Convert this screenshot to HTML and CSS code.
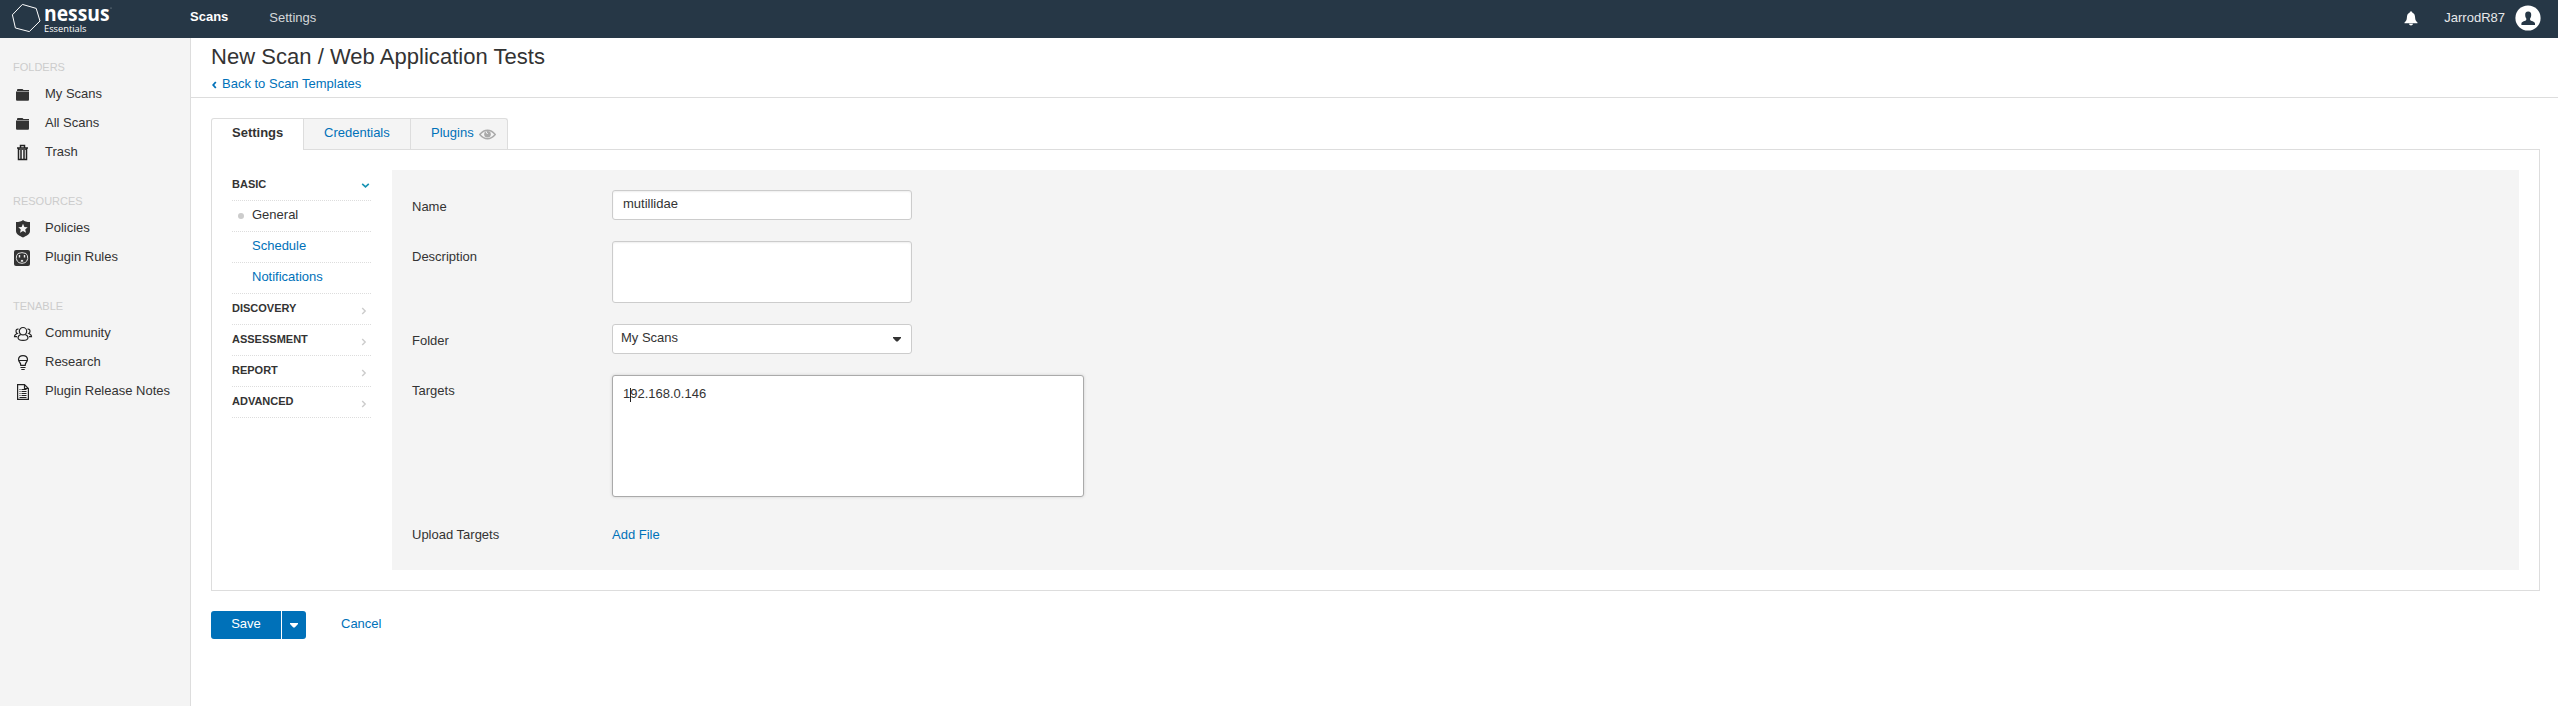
FILE: index.html
```html
<!DOCTYPE html>
<html lang="en">
<head>
<meta charset="utf-8">
<title>Nessus Essentials / New Scan</title>
<link rel="stylesheet" href="styles.css">
</head>
<body>
<header class="topbar">
  <svg class="logo" width="116" height="38" viewBox="0 0 116 38">
    <path d="M22.4 4.4 36.2 8.4 40 21 29.3 31.6 15.4 28 12.4 14.8Z" fill="none" stroke="#fff" stroke-width="1"/>
    <text class="logo-name" x="44" y="21.3" textLength="65.500" lengthAdjust="spacingAndGlyphs">nessus</text>
    <text class="logo-edition" x="44" y="31.700" textLength="42.5" lengthAdjust="spacingAndGlyphs">Essentials</text>
    <circle cx="111" cy="8" r=".6" fill="#9aa4ac"/>
  </svg>
  <nav class="topnav"><a class="active">Scans</a><a>Settings</a></nav>
  <div class="account">
    <svg class="bell" width="14" height="15" viewBox="0 0 14 15"><path d="M7 .5C8 .5 8.300 1.100 8.400 1.700 10.500 2.500 11 4.300 11.100 6.500 11.200 9 12 10.400 13.500 11.500V12.200H.5V11.500C2 10.400 2.800 9 2.900 6.500 3 4.300 3.500 2.500 5.600 1.700 5.700 1.100 6 .5 7 .5ZM5 12.700H9C8.800 13.900 8 14.400 7 14.400S5.200 13.900 5 12.700Z" fill="#fff"/></svg>
    <span class="user">JarrodR87</span>
    <svg width="26" height="26" viewBox="0 0 26 26"><circle cx="13" cy="13" r="12.600" fill="#fff"/><path d="M13.200 6.500C15.500 6.500 16.300 7.900 16.200 9.800 16.200 11.500 15.800 12.600 15.100 13.400V15C15.500 16 20 16.300 20 18.500V19.900H6.400V18.500C6.400 16.300 10.900 16 11.300 15V13.400C10.600 12.600 10.200 11.500 10.200 9.800 10.100 7.900 10.900 6.500 13.200 6.500Z" fill="#263746"/></svg>
  </div>
</header>
<div class="layout">
  <aside class="sidebar">
    <h3>FOLDERS</h3>
    <ul>
      <li><svg class="icon" viewBox="0 0 20 20"><path d="M4 6V5Q4 4 5 4H9.500L10.500 5H16V6ZM3 6.400H16V14.600Q16 15.800 15 15.800H4Q3 15.800 3 14.600Z"/></svg>My Scans</li>
      <li><svg class="icon" viewBox="0 0 20 20"><path d="M4 6V5Q4 4 5 4H9.500L10.500 5H16V6ZM3 6.400H16V14.600Q16 15.800 15 15.800H4Q3 15.800 3 14.600Z"/></svg>All Scans</li>
      <li><svg class="icon" viewBox="0 0 20 20"><g class="line"><path d="M7.500 4.500V2.600H11.500V4.500M4 5H15M5.500 5.500V16.400H13.500V5.500M8 7V16M11 7V16" stroke-width="1.500"/><path d="M5 6.300H14" stroke-width="1"/></g></svg>Trash</li>
    </ul>
    <h3>RESOURCES</h3>
    <ul>
      <li><svg class="icon" viewBox="0 0 20 20"><path fill-rule="evenodd" d="M10 1C11.500 2.500 14 3 17 3V12C17 15.500 13 17 10 18.500 7 17 3 15.500 3 12V3C6 3 8.500 2.500 10 1ZM10 4.800 8.600 7.900 5.300 8.200 7.800 10.400 7 13.800 10 12 13 13.800 12.200 10.400 14.700 8.200 11.400 7.900Z"/></svg>Policies</li>
      <li><svg class="icon" viewBox="0 0 20 20"><rect x="1" y="2" width="16" height="16" rx="2"/><path d="M5 5.500Q9 3.800 13 5.500 15 7.500 14.700 10.500 14.200 13.500 12 14.700 9 16 6 14.700 3.800 13.500 3.300 10.500 3 7.500 5 5.500Z" fill="none" stroke="#ddd"/><path d="M6.500 7V9.500M11.500 7V9.500" stroke="#eee" stroke-width="1.400"/><path d="M7.800 13.700V12.500Q9 11 10.200 12.500V13.700Z" fill="#eee"/></svg>Plugin Rules</li>
    </ul>
    <h3>TENABLE</h3>
    <ul>
      <li><svg class="icon" viewBox="0 0 20 20"><g class="line"><circle cx="10" cy="7.200" r="3.700"/><path d="M7.800 10.500Q5 11.500 5 14 5.500 16.400 10 16.400T15 14Q15 11.500 12.200 10.500M5.500 5.200Q3 4.800 3 7.200 3 8.800 4.300 9.500 1.500 10.500 1.500 12.700H4M14.500 5.200Q17 4.800 17 7.200 17 8.800 15.700 9.500 18.500 10.500 18.500 12.700H16"/></g></svg>Community</li>
      <li><svg class="icon" viewBox="0 0 20 20"><g class="line"><path d="M7.800 12.300Q7.800 10.500 6.500 9 5.500 8 5.500 6.300 6 2.600 10 2.600T14.500 6.300Q14.500 8 13.500 9 12.200 10.500 12.200 12.300ZM5.800 7.500H14.200M7.500 14.500H12.500M8.300 16.500H11.700"/></g></svg>Research</li>
      <li><svg class="icon" viewBox="0 0 20 20"><g class="line"><path d="M4.600 2.600H11.500L15.400 6.500V17.400H4.600ZM11.500 2.600V6.500H15.400"/><path d="M6.500 7.500H7.500M8.500 7.500H13.500M6.500 9.500H7.500M8.500 9.500H13.500M6.500 11.500H7.500M8.500 11.500H13.500M6.500 13.500H7.500M8.500 13.500H13.500M6.500 15.500H13.500"/></g></svg>Plugin Release Notes</li>
    </ul>
  </aside>
  <main class="main">
    <div class="page-head">
      <h1>New Scan / Web Application Tests</h1>
      <a class="back"><svg width="11" height="20" viewBox="0 0 11 20"><path d="M4.800 8 2.200 11 4.800 14" fill="none" stroke="#0071b9" stroke-width="1.800"/></svg>Back to Scan Templates</a>
    </div>
    <div class="content">
      <div class="tabs">
        <a class="tab tab-settings">Settings</a>
        <a class="tab tab-credentials">Credentials</a>
        <a class="tab tab-plugins">Plugins<svg width="17" height="11" viewBox="0 0 17 11"><path d="M.8 5.500Q4.300 1.300 8.500 1.300T16.200 5.500Q12.700 9.700 8.500 9.700T.8 5.500Z" fill="none" stroke="#aaa" stroke-width="1.500"/><circle cx="8.500" cy="5.200" r="3.300" fill="#aaa"/><path d="M7.300 2.500Q7 4.600 8.800 4.600" fill="none" stroke="#f4f4f4" stroke-width="1"/></svg></a>
      </div>
      <div class="panel">
        <nav class="sections">
          <div class="section">BASIC<svg class="chev" width="9" height="8" viewBox="0 0 9 8"><path d="M1.200 1.800 4.500 4.800 7.800 1.800" fill="none" stroke="#1793b3" stroke-width="1.600"/></svg></div>
          <a class="sub current">General</a>
          <a class="sub">Schedule</a>
          <a class="sub">Notifications</a>
          <div class="section">DISCOVERY<svg class="chev side" width="6" height="8" viewBox="0 0 6 8"><path d="M1.200 1 4.200 4 1.200 7" fill="none" stroke="#ccc" stroke-width="1.400"/></svg></div>
          <div class="section">ASSESSMENT<svg class="chev side" width="6" height="8" viewBox="0 0 6 8"><path d="M1.200 1 4.200 4 1.200 7" fill="none" stroke="#ccc" stroke-width="1.400"/></svg></div>
          <div class="section">REPORT<svg class="chev side" width="6" height="8" viewBox="0 0 6 8"><path d="M1.200 1 4.200 4 1.200 7" fill="none" stroke="#ccc" stroke-width="1.400"/></svg></div>
          <div class="section">ADVANCED<svg class="chev side" width="6" height="8" viewBox="0 0 6 8"><path d="M1.200 1 4.200 4 1.200 7" fill="none" stroke="#ccc" stroke-width="1.400"/></svg></div>
        </nav>
        <div class="form">
          <div class="row"><label>Name</label><div class="field name">mutillidae</div></div>
          <div class="row"><label class="tall">Description</label><div class="field description"></div></div>
          <div class="row"><label>Folder</label><div class="field select">My Scans<svg width="8" height="5" viewBox="0 0 8 5"><path d="M0 0H8V1L4.700 4.500H3.300L0 1Z" fill="#333"/></svg></div></div>
          <div class="row"><label class="tall">Targets</label><div class="field targets">192.168.0.146<span class="caret"></span></div></div>
          <div class="row"><label>Upload Targets</label><a class="add-file">Add File</a></div>
        </div>
      </div>
      <div class="actions">
        <button class="save">Save</button><button class="more"><svg width="8" height="5" viewBox="0 0 8 5"><path d="M0 0H8V1L4.700 4.500H3.300L0 1Z" fill="#fff"/></svg></button>
        <a class="cancel">Cancel</a>
      </div>
    </div>
  </main>
</div>
</body>
</html>
```
FILE: styles.css
```css
* { box-sizing: border-box; }
body { margin: 0; font: 13px/20px "Liberation Sans", Arial, sans-serif; color: #333; background: #fff; }
h1, h3, ul { margin: 0; padding: 0; font-weight: normal; list-style: none; }
svg { display: block; flex: none; }
a { color: #0071b9; }

.topbar { display: flex; height: 38px; background: #263746; color: #d4d7da; }
.logo-name { font: 700 21.5px "Open Sans", sans-serif; fill: #fff; }
.logo-edition { font: 9.3px "Open Sans", sans-serif; fill: #fff; }
.topnav { display: flex; gap: 41px; padding: 8px 0 0 74px; }
.topnav a { color: #d4d7da; line-height: 20px; }
.topnav .active { color: #fff; font-weight: bold; line-height: 18px; }
.account { display: flex; margin-left: auto; padding: 5px 17px 0 0; }
.bell { margin: 6px 26px 0 0; }
.user { color: #e6e8ea; line-height: 25px; margin-right: 10px; }

.layout { display: flex; height: 668px; }
.sidebar { flex: none; width: 191px; padding: 19px 0 0 13px; background: #f4f4f4; border-right: 1px solid #ddd; }
.sidebar h3 { font-size: 11px; line-height: 20px; color: #ccc; margin-bottom: 2px; }
.sidebar ul { margin-bottom: 25px; }
.sidebar li { display: flex; align-items: flex-start; line-height: 29px; height: 29px; }
.icon { width: 20px; height: 20px; margin: 6px 12px 0 0; fill: #333; }
.line { fill: none; stroke: #222; stroke-width: 1.2; }

.main { flex: 1; }
.page-head { height: 60px; padding: 4px 0 0 20px; border-bottom: 1px solid #ddd; }
.page-head h1 { font-size: 22px; line-height: 30px; letter-spacing: 0.03px; }
.back { display: flex; margin-top: 2px; }
.content { padding: 20px 18px 0 20px; }

.tabs { display: flex; }
.tab { height: 31px; padding: 4px 20px 0; border: 1px solid #ddd; border-bottom: 0; border-left-width: 0; background: #f4f4f4; }
.tab-settings { width: 93px; border-left-width: 1px; border-radius: 3px 0 0 0; background: #fff; color: #333; font-weight: bold; height: 32px; margin-bottom: -1px; position: relative; }
.tab-credentials { width: 107px; }
.tab-plugins { display: flex; width: 97px; border-radius: 0 3px 0 0; }
.tab-plugins svg { margin: 6px 0 0 5px; }

.panel { display: flex; height: 442px; padding: 20px; border: 1px solid #ddd; }
.sections { width: 139px; margin-right: 21px; }
.section, .sub { display: flex; justify-content: space-between; height: 31px; border-bottom: 1px dotted #ddd; }
.section { font-size: 11px; font-weight: bold; line-height: 28px; }
.chev { margin: 12px 1px 0 0; }
.side { margin: 13px 4px 0 0; }
.sub { line-height: 27px; padding-left: 20px; }
.current { color: #333; padding-left: 6px; justify-content: flex-start; }
.current::before { content: ""; width: 6px; height: 6px; border-radius: 50%; background: #ccc; margin: 12px 8px 0 0; }
.form { flex: 1; padding: 20px; background: #f4f4f4; }
.row { display: flex; margin-bottom: 21px; }
.row label { width: 200px; padding-top: 7px; }
.row .tall { padding-top: 6px; }
.field { width: 300px; height: 30px; background: #fff; border: 1px solid #ccc; border-radius: 3px; box-shadow: inset 0 1px 2px #eee; }
.name { padding: 3px 10px; }
.description { height: 62px; }
.select { display: flex; justify-content: space-between; padding: 3px 10px 0 8px; box-shadow: none; }
.select svg { margin-top: 9px; }
.targets { position: relative; width: 472px; height: 122px; padding: 8px 10px; border-color: #aaa; box-shadow: 0 0 3px #ccc; }
.caret { position: absolute; left: 17px; top: 12px; width: 1px; height: 14px; background: #222; }
.add-file { padding-top: 7px; }

.actions { display: flex; margin-top: 20px; }
.actions button { height: 28px; padding: 0 0 3px; border: 0; font: inherit; color: #fff; background: #0071b9; }
.save { width: 70px; border-radius: 3px 0 0 3px; }
.actions .more { display: flex; align-items: center; justify-content: center; width: 24px; padding: 0; margin-left: 1px; border-radius: 0 3px 3px 0; }
.cancel { margin: 3px 0 0 35px; }
```
